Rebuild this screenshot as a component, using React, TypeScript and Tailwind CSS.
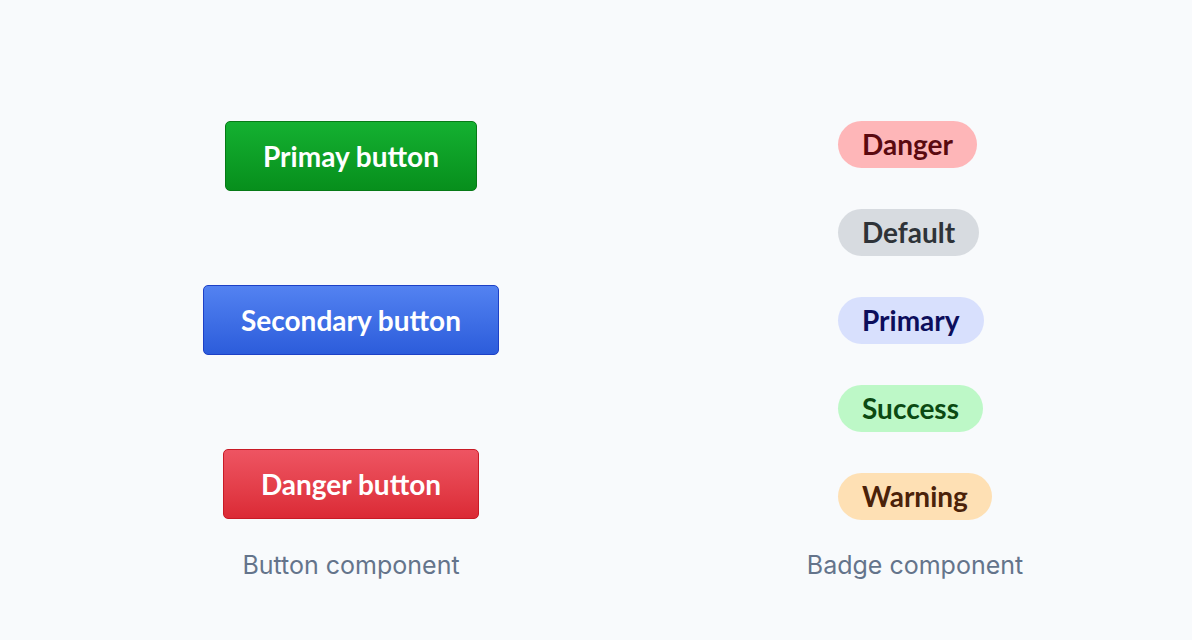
import React from "react";

const buttons = [
  {
    label: "Primay button",
    cls: "bg-gradient-to-b from-[#14b131] to-[#078f1c] border-[#077a17]",
  },
  {
    label: "Secondary button",
    cls: "bg-gradient-to-b from-[#5382f1] to-[#2c5cdb] border-[#1d40c6]",
  },
  {
    label: "Danger button",
    cls: "bg-gradient-to-b from-[#ee5462] to-[#db2935] border-[#c81a26]",
  },
];

const badges = [
  { label: "Danger", cls: "bg-[#feb6b8] text-[#5a0a10]" },
  { label: "Default", cls: "bg-[#d7dbe0] text-[#2e3338]" },
  { label: "Primary", cls: "bg-[#d8e0fd] text-[#0c0e5c]" },
  { label: "Success", cls: "bg-[#bdf8c7] text-[#0b4a12]" },
  { label: "Warning", cls: "bg-[#fee0b4] text-[#4b2209]" },
];

export default function App() {
  return (
    <div className="w-[1192px] h-[640px] bg-[#f8fafc] flex">
      <div className="w-[702px] flex flex-col items-center pt-[121px]">
        <div className="flex flex-col items-center gap-[94px]">
          {buttons.map((b) => (
            <button
              key={b.label}
              className={`h-[70px] px-[37px] border rounded-[5px] text-white text-[28px] font-bold ${b.cls}`}
              style={{ fontFamily: "Lato, 'Open Sans', sans-serif" }}
            >
              {b.label}
            </button>
          ))}
        </div>
        <div
          className="mt-[30px] text-[25px] leading-8 text-[#64748b]"
          style={{ fontFamily: "Inter, 'Noto Sans', sans-serif" }}
        >
          Button component
        </div>
      </div>
      <div className="w-[426px] flex flex-col items-center pt-[121px]">
        <div className="flex flex-col items-start gap-[41px] w-[154px]">
          {badges.map((b) => (
            <span
              key={b.label}
              className={`h-[47px] px-6 pb-[2px] rounded-full flex items-center text-[28px] font-bold ${b.cls}`}
              style={{ fontFamily: "Lato, 'Open Sans', sans-serif" }}
            >
              {b.label}
            </span>
          ))}
        </div>
        <div
          className="mt-[29px] text-[25px] leading-8 text-[#64748b]"
          style={{ fontFamily: "Inter, 'Noto Sans', sans-serif" }}
        >
          Badge component
        </div>
      </div>
    </div>
  );
}
